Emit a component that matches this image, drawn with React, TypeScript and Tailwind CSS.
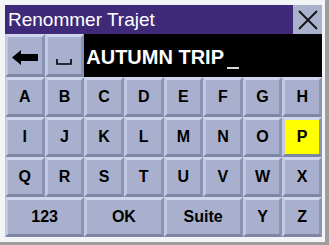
import React from "react";

const keyBase =
  "flex items-center justify-center border-t-[3px] border-l-[3px] border-b-[3px] border-r-[3px] border-t-[#cfd5ec] border-l-[#c3c9e3] border-b-[#7e86a5] border-r-[#8b93b2] text-black font-bold text-[16px] leading-none";

function Key({ label, span = 1, yellow = false }: { label: string; span?: number; yellow?: boolean }) {
  return (
    <div
      className={`${keyBase} ${yellow ? "bg-[#ffff00]" : "bg-[#a9b0cd]"} ${span === 2 ? "col-span-2" : ""}`}
      style={{ fontFamily: '"Liberation Sans", Arial, sans-serif' }}
    >
      {label}
    </div>
  );
}

export default function App() {
  const rows = [
    ["A", "B", "C", "D", "E", "F", "G", "H"],
    ["I", "J", "K", "L", "M", "N", "O", "P"],
    ["Q", "R", "S", "T", "U", "V", "W", "X"],
  ];
  return (
    <div
      className="w-[329px] h-[245px] bg-[#9d9d9d] flex items-start"
      style={{ fontFamily: '"Liberation Sans", Arial, sans-serif' }}
    >
      <div className="w-[325px] h-[242px] bg-[#f3f4f6] pl-[5px] pt-[5px] pr-[3px] pb-[5px] flex flex-col">
        <div className="h-[29px] flex">
          <div className="flex-1 bg-[#3f2a79] flex items-center pl-[3px] text-white text-[19px] leading-none">
            Renommer Trajet
          </div>
          <div className="w-[29px] bg-[#aab1cc] flex items-center justify-center">
            <svg width="22" height="22" viewBox="0 0 22 22">
              <path d="M2 2 L20 20 M20 2 L2 20" stroke="#111" strokeWidth="1.8" fill="none" />
            </svg>
          </div>
        </div>
        <div className="grid grid-cols-8 grid-rows-[43px_40px_40px_40px_40px] h-[203px]">
          <div className={`${keyBase} bg-[#a9b0cd] pt-[4px]`}>
            <svg width="26" height="15" viewBox="0 0 26 15">
              <path d="M0 7.5 L9 0 L9 4 L26 4 L26 11 L9 11 L9 15 Z" fill="#000" />
            </svg>
          </div>
          <div className={`${keyBase} bg-[#a9b0cd] items-end pb-[9px]`}>
            <svg width="16" height="6" viewBox="0 0 16 6">
              <path d="M1 0 L1 5 L15 5 L15 0" stroke="#000" strokeWidth="1.6" fill="none" />
            </svg>
          </div>
          <div className="col-span-6 bg-black flex items-center pl-[2px] pt-[2px] text-white font-bold text-[20px] leading-none">
            <span>AUTUMN TRIP</span>
            <span className="inline-block w-[12px] h-[2px] bg-[#d8d8d8] ml-[3px] mt-[22px]"></span>
          </div>
          {rows.map((r) => r.map((k) => <Key key={k} label={k} yellow={k === "P"} />))}
          <Key label="123" span={2} />
          <Key label="OK" span={2} />
          <Key label="Suite" span={2} />
          <Key label="Y" />
          <Key label="Z" />
        </div>
      </div>
    </div>
  );
}
